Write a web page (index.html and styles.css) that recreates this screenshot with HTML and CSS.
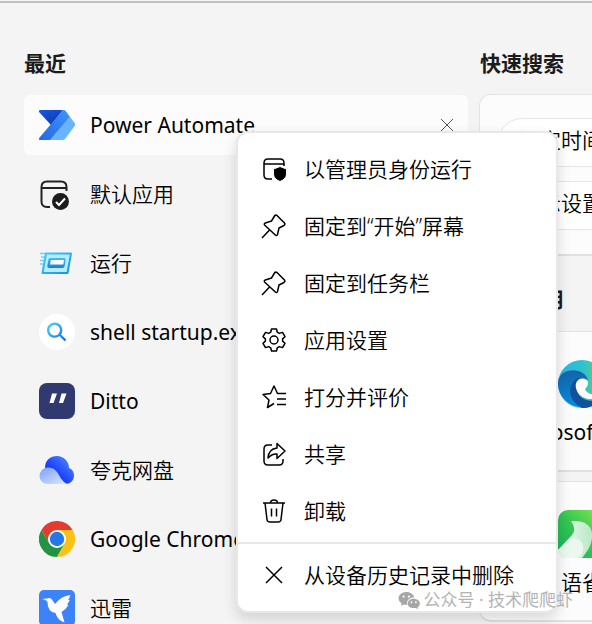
FILE: index.html
```html
<!DOCTYPE html>
<html lang="zh-CN">
  <head>
    <meta charset="UTF-8" />
    <meta name="viewport" content="width=device-width, initial-scale=1.0" />
    <title>搜索</title>
    <link rel="stylesheet" href="styles.css">
  </head>
  <body>
    <main class="panel">
      <section class="recent">
        <h2>最近</h2>
        <ul class="app-list">
          <li class="app active">
            <a href="#">
              <svg class="app-icon" viewBox="0 0 36 36">
                <defs>
                  <linearGradient id="pa1" x1="0" y1="0" x2="1" y2="1"><stop offset="0" stop-color="#1a5be0" /><stop offset="1" stop-color="#0a35a8" /></linearGradient>
                  <linearGradient id="pa2" x1="1" y1="0" x2="0" y2="1"><stop offset="0" stop-color="#3f95fa" /><stop offset="1" stop-color="#2467e8" /></linearGradient>
                </defs>
                <path d="M1 3h23L12 18 0 5q-.6-2 1-2z" fill="url(#pa1)" />
                <path d="M24 3q1.500 0 2.500 1L36 16.500q.8 1 0 2L26 32q-1 1-2.500 1H11L31 10z" fill="#68b5ff" />
                <path d="M24 3q1.500 0 2.500 1L31 10 11 33H1q-1.600-.6-.8-2z" fill="url(#pa2)" />
              </svg>
              <span class="latin">Power Automate</span>
            </a>
            <button class="remove" type="button" aria-label="删除">
              <svg viewBox="0 0 14 14"><path d="M1 1l12 12M13 1L1 13" /></svg>
            </button>
          </li>
          <li class="app">
            <a href="#">
              <svg class="app-icon" viewBox="0 0 36 36">
                <path d="M11 31H8q-5.500 0-5.500-5.500V11Q2.500 5.500 8 5.500h14q5.500 0 5.500 5.500v4M2.500 12h25" fill="none" stroke="#222" stroke-width="2" />
                <circle cx="21.500" cy="25.500" r="8.500" fill="#1c1c1c" />
                <path d="M17 26l3 3 6-6.500" fill="none" stroke="#fff" stroke-width="2" />
              </svg>
              <span>默认应用</span>
            </a>
          </li>
          <li class="app">
            <a href="#">
              <svg class="app-icon" viewBox="0 0 36 36">
                <defs>
                  <linearGradient id="run1" x1="0" y1="0" x2="1" y2="1"><stop offset="0" stop-color="#49c8f7" /><stop offset="1" stop-color="#1794dc" /></linearGradient>
                  <linearGradient id="run2" x1="0" y1="0" x2="0" y2="1"><stop offset="0" stop-color="#43bdf0" /><stop offset="1" stop-color="#1583cf" /></linearGradient>
                </defs>
                <path d="M1 8.500h7M2 12h4M1 15.500h4M1 19h3" stroke="#73cff5" stroke-width="1.500" />
                <path d="M7 8.500h25L28.500 28H3.500z" fill="#b5ecff" stroke="url(#run1)" stroke-width="2" stroke-linejoin="round" />
                <path d="M11 13h14q2 0 1.600 2l-1 6q-.3 2-2.300 2h-13q-2.300 0-2-2l1-6q.2-2 1.700-2z" fill="url(#run2)" />
                <path d="M12 15h13l-.7 4.500H11z" fill="#fff" />
              </svg>
              <span>运行</span>
            </a>
          </li>
          <li class="app">
            <a href="#">
              <svg class="app-icon" viewBox="0 0 36 36">
                <defs>
                  <linearGradient id="find" x1="0" y1="0" x2="1" y2="1"><stop offset="0" stop-color="#4ad4f2" /><stop offset="1" stop-color="#1767e8" /></linearGradient>
                </defs>
                <circle cx="18" cy="18" r="18" fill="#fff" />
                <path d="M26.500 26.500l-6-6a6.500 6.500 0 1 0-.5.500" fill="none" stroke="url(#find)" stroke-width="2.300" />
              </svg>
              <span class="latin">shell startup.exe</span>
            </a>
          </li>
          <li class="app">
            <a href="#">
              <svg class="app-icon" viewBox="0 0 36 36">
                <rect width="36" height="36" rx="8" fill="#303a70" />
                <path d="M13 10.500h5l-3.500 9.500h-4zM22.500 10.500h5L24 20h-4z" fill="#fff" />
              </svg>
              <span class="latin">Ditto</span>
            </a>
          </li>
          <li class="app">
            <a href="#">
              <svg class="app-icon" viewBox="0 0 36 36">
                <defs>
                  <linearGradient id="cl1" x1="1" y1="0" x2="0" y2="1"><stop offset="0" stop-color="#5a98ff" /><stop offset=".6" stop-color="#1a40ff" /></linearGradient>
                  <linearGradient id="cl2" x1="0" y1="0" x2="1" y2="1"><stop offset="0" stop-color="#7ba0ff" /><stop offset="1" stop-color="#dfe8ff" /></linearGradient>
                </defs>
                <path d="M6 16C6 8 11.500 4 18 4s12 5 12 12c3 1 5 4 5 7.500 0 5-4 8.500-9 8.500H14L6 18z" fill="url(#cl1)" />
                <path d="M9 15.500c8 0 10 6 13 11q2.500 4 6 5.500H8.500A8 8 0 0 1 .5 24a8.500 8.500 0 0 1 8.500-8.500z" fill="url(#cl2)" />
              </svg>
              <span>夸克网盘</span>
            </a>
          </li>
          <li class="app">
            <a href="#">
              <svg class="app-icon" viewBox="0 0 36 36">
                <path d="M2.400 9A18 18 0 0 1 33.600 9H18L10.200 22.500z" fill="#e33b2e" />
                <path d="M2.400 9A18 18 0 0 0 18 36l7.800-13.500H10.200z" fill="#229342" />
                <path d="M33.600 9A18 18 0 0 1 18 36l7.800-13.500L18 9z" fill="#fbc116" />
                <circle cx="18" cy="18" r="9" fill="#fff" />
                <circle cx="18" cy="18" r="7.200" fill="#2577e8" />
              </svg>
              <span class="latin">Google Chrome</span>
            </a>
          </li>
          <li class="app">
            <a href="#">
              <svg class="app-icon" viewBox="0 0 36 36">
                <rect width="36" height="36" rx="5" fill="#3c83fa" />
                <path d="M3 9l5-.5q4-1.500 6 2.500l2 3q6-8 15.500-9-1 3-2.500 5l2-.3-3 5 1.500.3q-3 5-7 7l3 10.500q-7-2-9-9.500-8-1-8-11-1-2-5.500-3z" fill="#fff" />
              </svg>
              <span>迅雷</span>
            </a>
          </li>
        </ul>
      </section>

      <section class="side">
        <h2>快速搜索</h2>
        <div class="card quick">
          <a class="chip" href="#">设定时间</a>
          <a class="chip" href="#">显示设置</a>
        </div>
        <h2>热门应用</h2>
        <a class="card tile" href="#">
          <svg class="tile-icon" viewBox="0 0 48 48">
            <defs>
              <linearGradient id="ed1" x1="0" y1="0" x2="1" y2="0"><stop offset="0" stop-color="#2eb5e4" /><stop offset=".5" stop-color="#2fc0d0" /><stop offset="1" stop-color="#62d957" /></linearGradient>
              <linearGradient id="ed2" x1="0" y1="0" x2="0" y2="1"><stop offset="0" stop-color="#1464a8" /><stop offset="1" stop-color="#078be0" /></linearGradient>
            </defs>
            <circle cx="24" cy="24" r="24" fill="url(#ed1)" />
            <path d="M0 23C1 6 28 7 30 21c-7-5-15 1-12 11 3 8 12 12 22 9A24 24 0 0 1 0 23z" fill="url(#ed2)" />
            <path d="M20 18c-11 6-11 22 4 30 8 0 15-3 20-10-10 6-24 2-25-9-.5-5 1-9 4-10z" fill="#12529c" />
            <path d="M29 20c-8-5-14 3-10 11 4 9 18 11 27 3 2-2-2-1-4 0-8 2-14-1-15-5 3-3 4-6 2-9z" fill="#fcfcfc" />
          </svg>
          <span class="latin">Microsoft Edge</span>
        </a>
        <a class="card tile" href="#">
          <svg class="tile-icon" viewBox="0 0 48 48">
            <defs>
              <linearGradient id="yq" x1="0" y1="1" x2="1" y2="0"><stop offset="0" stop-color="#14b05c" /><stop offset=".5" stop-color="#36c652" /><stop offset="1" stop-color="#8bea4d" /></linearGradient>
              <linearGradient id="yq2" x1="0" y1="0" x2="1" y2="0"><stop offset="0" stop-color="#f3fbf5" /><stop offset="1" stop-color="#b9e8c7" /></linearGradient>
            </defs>
            <rect width="48" height="48" rx="10" fill="url(#yq)" />
            <path d="M13 11c15-1 20 5 21 12 1 10-4 18-10 25H6q-5-1-6-8l14-15q5-6-1-14z" fill="url(#yq2)" />
            <path d="M0 41l10-11c8-5 17 2 15 10-1 5-4 8-7 8H6q-5 0-6-7z" fill="#eaf8ee" />
          </svg>
          <span>语雀</span>
        </a>
      </section>
    </main>

    <div class="menu" role="menu">
      <button type="button" role="menuitem">
        <svg viewBox="0 0 24 24"><path d="M10 22H6q-4 0-4-4V6q0-4 4-4h12q4 0 4 4v3M2 7h20" /><path class="solid" d="M18 9.500l6.500 2.500v5q0 5-6.500 7.500-6.500-2.500-6.500-7.500v-5z" /></svg>
        以管理员身份运行
      </button>
      <button type="button" role="menuitem">
        <svg viewBox="0 0 24 24"><path d="M0 24l8-8.500M15 1.500l7.500 7.500q1 1.500-.5 2.500l-5 2.500-1.500 6.500q-.8 1.800-2.200.5L2.800 11.200q-1.300-1.400.5-2.200l6.200-2 3-5q1-1.500 2.500-.5z" /></svg>
        固定到“开始”屏幕
      </button>
      <button type="button" role="menuitem">
        <svg viewBox="0 0 24 24"><path d="M0 24l8-8.500M15 1.500l7.500 7.500q1 1.500-.5 2.500l-5 2.500-1.500 6.500q-.8 1.800-2.200.5L2.800 11.200q-1.300-1.400.5-2.200l6.200-2 3-5q1-1.500 2.500-.5z" /></svg>
        固定到任务栏
      </button>
      <button type="button" role="menuitem">
        <svg viewBox="0 0 24 24"><path d="M9.500 1h5l.8 3.200 2 1.200 3.200-1 2.500 4.300-2.400 2.200v2.200l2.400 2.200-2.500 4.300-3.200-1-2 1.200-.8 3.200h-5l-.8-3.200-2-1.200-3.200 1L1 15.300l2.400-2.200v-2.200L1 8.700l2.500-4.300 3.200 1 2-1.200z" /><circle cx="12" cy="12" r="4" /></svg>
        应用设置
      </button>
      <button type="button" role="menuitem">
        <svg viewBox="0 0 24 24"><path d="M12 18.500l-6.500 4L7 15 1 9.500l7.500-1L12 1l3.500 7.500H24M15 14h9M15 19.500h9" /></svg>
        打分并评价
      </button>
      <button type="button" role="menuitem">
        <svg viewBox="0 0 24 24"><path d="M10 3H6Q2 3 2 7v12q0 4 4 4h11q4 0 4-4v-2M15 1.500L23 9l-8 7.500V12q-5-.5-9 4 .5-9 9-10z" /></svg>
        共享
      </button>
      <button type="button" role="menuitem">
        <svg viewBox="0 0 24 24"><path d="M1 4h22M8.500 4q0-3 3.500-3t3.500 3M3 4l2 16.500q.3 2.500 3 2.500h8q2.700 0 3-2.500L21 4M9.500 9.500v8M14.500 9.500v8" /></svg>
        卸载
      </button>
      <hr />
      <button type="button" role="menuitem">
        <svg viewBox="0 0 24 24"><path d="M4 4l16 16M20 4L4 20" /></svg>
        从设备历史记录中删除
      </button>
    </div>

    <div class="watermark">
      <svg viewBox="0 0 24 20">
        <path fill-rule="evenodd" d="M9 1c5 0 8.500 3 8.700 6.300C12.500 7 8.700 11 10 15.300c-1.300.1-2.500 0-3.700-.3L3 16.500l.8-2.800C-2.500 9.500.5 1 9 1zM6 5a1.200 1.200 0 1 0 0 2.400A1.200 1.200 0 1 0 6 5zm6 0a1.200 1.200 0 1 0 0 2.400A1.200 1.200 0 1 0 12 5z" />
        <path fill-rule="evenodd" d="M17 8.500c7 0 9.500 6.500 4.500 9.500l.5 2-2.500-1.200c-5 1-9-1.500-9-5 0-3 3-5.300 6.500-5.300zm-2.300 3a1 1 0 1 0 0 2 1 1 0 1 0 0-2zm5 0a1 1 0 1 0 0 2 1 1 0 1 0 0-2z" />
      </svg>
      公众号 · 技术爬爬虾
    </div>
  </body>
</html>
```

FILE: styles.css
```css
* {
  box-sizing: border-box;
}

body {
  margin: 0;
  height: 100vh;
  overflow: hidden;
  position: relative;
  background-color: #f4f4f4;
  color: #000;
  font-family: "Noto Sans", "Noto Sans CJK SC", sans-serif;
  font-size: 21px;
  /* Un poco más fina que la normal */
  font-weight: 350;
  line-height: 30px;
}

a {
  color: inherit;
  text-decoration: none;
}

button {
  border: 0;
  padding: 0;
  background: none;
  color: inherit;
  font: inherit;
}

h2 {
  margin: 0;
  color: #1b1b1b;
  font-size: 21px;
  line-height: 30px;
}

/* Los nombres en letra latina quedan muy finos con 350 */
.latin {
  font-weight: 400;
}

.panel {
  display: flex;
  gap: 11px;
  margin-top: 1px;
  padding: 45px 0 0 24px;
  border-top: 2px solid #bdc0be;
}

/* Lista de la izquierda */
.recent {
  flex: 1 0 444px;
}

.app-list {
  display: flex;
  flex-direction: column;
  gap: 9px;
  margin: 17px 0 0;
  padding: 0;
  list-style: none;
}

.app {
  display: flex;
  align-items: center;
  height: 60px;
  padding: 0 14px 0 15px;
  border-radius: 6px;
}

.app.active {
  background-color: #fcfcfc;
}

.app a {
  flex: 1;
  display: flex;
  align-items: center;
  gap: 15px;
}

.app-icon {
  width: 36px;
  height: 36px;
}

.remove {
  display: flex;
}

.remove svg {
  width: 14px;
  height: 14px;
  fill: none;
  stroke: #555;
}

/* Columna derecha */
.side {
  flex: none;
  width: 206px;
}

.side h2 {
  padding-left: 1px;
}

.card {
  border: 1px solid #e3e3e3;
  border-bottom: 2px solid #e0e0e0;
  border-radius: 12px;
  background-color: #fcfcfc;
}

.quick {
  display: flex;
  flex-direction: column;
  gap: 14px;
  margin: 16px 0 28px;
  padding: 23px 18px 24px;
}

.chip {
  padding: 6px 20px 11px;
  border: 1px solid #e6e6e6;
  border-radius: 24px;
  background-color: #fff;
  white-space: nowrap;
}

.tile {
  display: flex;
  flex-direction: column;
  align-items: center;
  gap: 9px;
  margin-bottom: 9px;
  padding: 28px 0 23px;
}

h2 + .tile {
  margin-top: 17px;
}

.tile-icon {
  width: 48px;
  height: 48px;
}

/* Menú contextual, encima de las dos columnas */
.menu {
  position: absolute;
  top: 131px;
  left: 236px;
  width: 322px;
  padding: 7px 0 8px;
  border: 2px solid #e8e8e8;
  border-radius: 12px;
  background-color: #fff;
  box-shadow: 0 6px 14px rgba(0, 0, 0, 0.14);
}

.menu button {
  display: flex;
  align-items: center;
  gap: 18px;
  width: 100%;
  height: 57px;
  padding: 0 24px;
  white-space: nowrap;
}

.menu svg {
  width: 24px;
  height: 24px;
  fill: none;
  stroke: #000;
  stroke-width: 1.5;
  stroke-linejoin: round;
  overflow: visible;
}

.menu .solid {
  fill: #000;
  stroke: #fff;
  stroke-width: 1;
}

.menu hr {
  height: 2px;
  margin: 3px 0 2px;
  border: 0;
  background-color: #e8e8e8;
}

.watermark {
  position: absolute;
  right: 19px;
  bottom: 10px;
  display: flex;
  align-items: center;
  gap: 4px;
  color: #b3b3b3;
  font-size: 17px;
  font-weight: 400;
  line-height: 28px;
}

.watermark svg {
  width: 22px;
  height: 18px;
  fill: #a6a6a6;
}
```
